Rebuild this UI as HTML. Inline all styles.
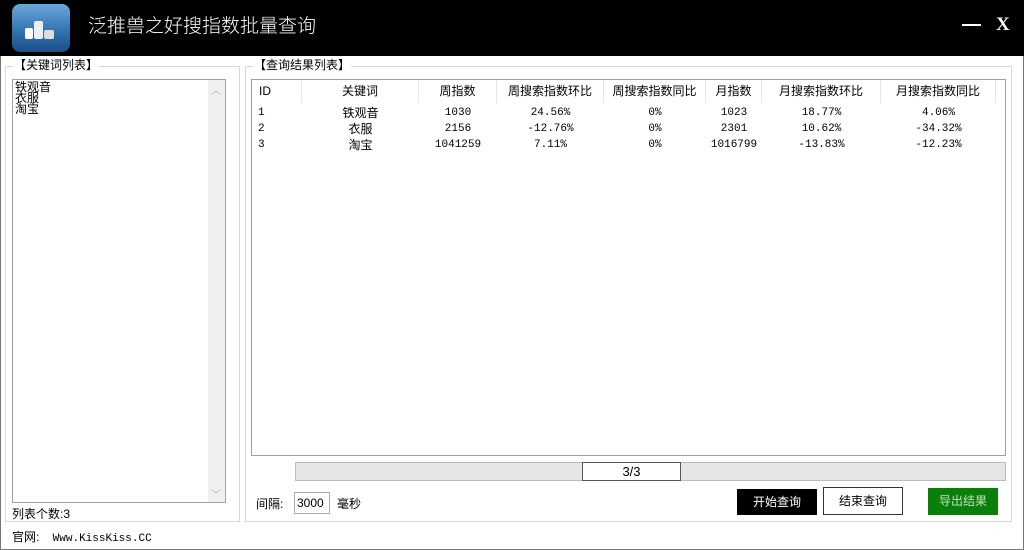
<!DOCTYPE html>
<html><head><meta charset="utf-8"><style>
*{margin:0;padding:0;box-sizing:border-box}
body{width:1024px;height:550px;position:relative;background:#fff;font-family:"Liberation Sans","Noto Sans CJK SC","WenQuanYi Zen Hei",sans-serif;font-size:12px;color:#000;overflow:hidden}
.a{position:absolute}
.title{left:0;top:0;width:1024px;height:56px;background:#000}
.grp{border:1px solid #d8d8d8}
.lbl{background:#fff;padding:0 1px;font-size:12px;line-height:12px}
.th{position:absolute;top:0;height:23px;line-height:23px;text-align:center;border-right:1px solid #e5e5e5;font-size:12px}
.td{position:absolute;text-align:center;font-family:"Liberation Mono","Noto Sans CJK SC",monospace;font-size:11px;line-height:16px}
</style></head><body>
<div class="a title"></div>
<div class="a" style="left:12px;top:4px;width:58px;height:48px;border-radius:8px;background:linear-gradient(#6aa8dc,#2f6fae 60%,#1d4f86)"></div>
<div class="a" style="left:25px;top:28px;width:8px;height:11px;background:#fff;border-radius:2px"></div>
<div class="a" style="left:34px;top:21px;width:9px;height:18px;background:#eee;border-radius:2px"></div>
<div class="a" style="left:44px;top:30px;width:10px;height:9px;background:#ddd;border-radius:2px"></div>
<div class="a" style="left:88px;top:14px;color:#fff;font-size:19px;line-height:26px;font-weight:300">泛推兽之好搜指数批量查询</div>
<div class="a" style="left:962px;top:24px;width:19px;height:2px;background:#fff"></div>
<div class="a" style="left:996px;top:14px;color:#fff;font-size:19px;font-weight:bold;font-family:'Liberation Serif',serif">X</div>
<div class="a" style="left:0;top:56px;width:1024px;height:494px;border:1px solid #777;border-top:none"></div>

<div class="a grp" style="left:5px;top:66px;width:235px;height:456px"></div>
<div class="a lbl" style="left:13px;top:59px">【关键词列表】</div>
<div class="a" style="left:12px;top:79px;width:214px;height:424px;border:1px solid #a0a0a0"></div>
<div class="a" style="left:208px;top:80px;width:17px;height:422px;background:#f0f0f0"></div>
<div class="a" style="left:211px;top:82px;color:#aaa;font-size:10px">︿</div>
<div class="a" style="left:211px;top:486px;color:#aaa;font-size:10px">﹀</div>
<div class="a" style="left:15px;top:82px;line-height:11px;font-size:12px">铁观音<br>衣服<br>淘宝</div>
<div class="a" style="left:12px;top:505px;font-size:12px">列表个数:3</div>
<div class="a" style="left:12px;top:528px;font-size:12px">官网: <span style="font-family:'Liberation Mono',monospace;font-size:11px;margin-left:10px">Www.KissKiss.CC</span></div>

<div class="a grp" style="left:245px;top:66px;width:767px;height:456px"></div>
<div class="a lbl" style="left:253px;top:59px">【查询结果列表】</div>
<div class="a" style="left:251px;top:79px;width:755px;height:377px;border:1px solid #a0a0a0">
<div class="th" style="left:0;width:50px;text-align:left;padding-left:7px">ID</div>
<div class="th" style="left:50px;width:117px">关键词</div>
<div class="th" style="left:167px;width:78px">周指数</div>
<div class="th" style="left:245px;width:107px">周搜索指数环比</div>
<div class="th" style="left:352px;width:102px">周搜索指数同比</div>
<div class="th" style="left:454px;width:56px">月指数</div>
<div class="th" style="left:510px;width:119px">月搜索指数环比</div>
<div class="th" style="left:629px;width:115px">月搜索指数同比</div>
</div>
<div class="a" style="left:252px;top:105px;width:753px">
<div class="td" style="left:6px;top:0;text-align:left">1<br>2<br>3</div>
<div class="td" style="left:50px;width:117px;font-family:'Noto Sans CJK SC',sans-serif;font-size:12px">铁观音<br>衣服<br>淘宝</div>
<div class="td" style="left:167px;width:78px">1030<br>2156<br>1041259</div>
<div class="td" style="left:245px;width:107px">24.56%<br>-12.76%<br>7.11%</div>
<div class="td" style="left:352px;width:102px">0%<br>0%<br>0%</div>
<div class="td" style="left:454px;width:56px">1023<br>2301<br>1016799</div>
<div class="td" style="left:510px;width:119px">18.77%<br>10.62%<br>-13.83%</div>
<div class="td" style="left:629px;width:115px">4.06%<br>-34.32%<br>-12.23%</div>
</div>

<div class="a" style="left:295px;top:462px;width:711px;height:19px;background:#e6e6e6;border:1px solid #bcbcbc"></div>
<div class="a" style="left:582px;top:462px;width:99px;height:19px;background:#fff;border:1px solid #555;text-align:center;line-height:17px;font-size:13px">3/3</div>
<div class="a" style="left:256px;top:495px">间隔:</div>
<div class="a" style="left:294px;top:492px;width:36px;height:22px;border:1px solid #aaa;line-height:20px;padding-left:2px;font-size:12px">3000</div>
<div class="a" style="left:337px;top:495px">毫秒</div>
<div class="a" style="left:737px;top:489px;width:80px;height:26px;background:#000;color:#fff;text-align:center;line-height:26px">开始查询</div>
<div class="a" style="left:823px;top:487px;width:80px;height:28px;border:1px solid #333;text-align:center;line-height:26px">结束查询</div>
<div class="a" style="left:928px;top:488px;width:70px;height:27px;background:#0a800a;color:#bfe0bf;text-align:center;line-height:27px">导出结果</div>
</body></html>
